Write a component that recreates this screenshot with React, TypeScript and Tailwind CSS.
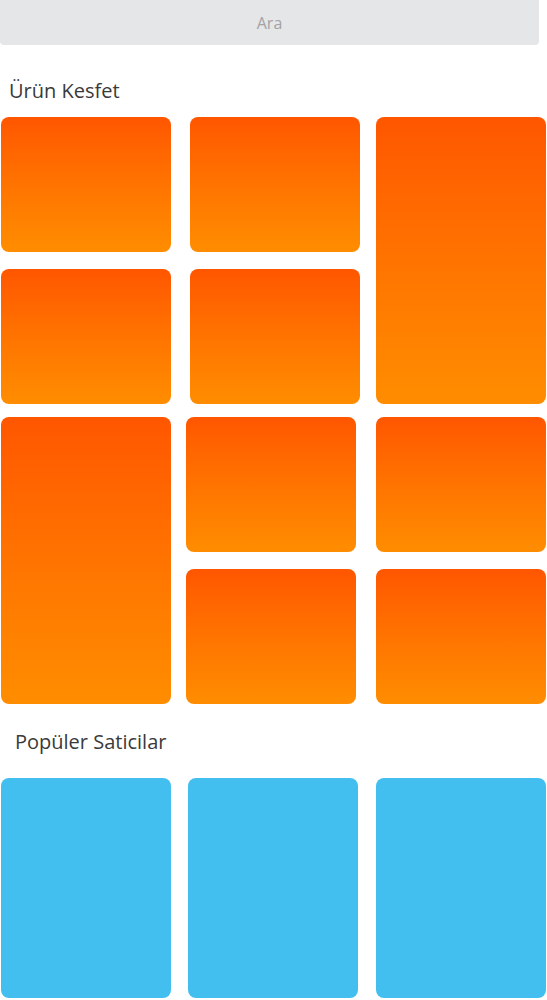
import React from 'react';

const font = { fontFamily: '"Open Sans", "Noto Sans", sans-serif' };

const Tile = ({ className = '' }: { className?: string }) => (
  <div className={`rounded-lg bg-gradient-to-b from-[#ff5600] to-[#ff8d00] ${className}`} />
);

const Seller = ({ className = '' }: { className?: string }) => (
  <div className={`h-[220px] w-[170px] rounded-lg bg-[#42bfef] ${className}`} />
);

export default function App() {
  return (
    <div className="w-[547px] bg-white" style={font}>
      {/* Arama */}
      <div className="flex h-[45px] w-[539px] items-center justify-center rounded-b-[4px] bg-[#e5e6e8]">
        <span className="text-[16px] font-medium text-[#a3a3a3]">Ara</span>
      </div>

      <h2 className="ml-[9px] mt-[33px] text-[20px] font-medium leading-[26px] text-[#3a3a3a]">Ürün Kesfet</h2>

      {/* Blok 1 */}
      <div className="mt-[13px] flex pl-px">
        <div className="flex w-[170px] flex-col gap-[17px]">
          <Tile className="h-[135px]" />
          <Tile className="h-[135px]" />
        </div>
        <div className="ml-[19px] flex w-[170px] flex-col gap-[17px]">
          <Tile className="h-[135px]" />
          <Tile className="h-[135px]" />
        </div>
        <Tile className="ml-[16px] h-[287px] w-[170px]" />
      </div>

      {/* Blok 2 */}
      <div className="mt-[13px] flex pl-px">
        <Tile className="h-[287px] w-[170px]" />
        <div className="ml-[15px] flex w-[170px] flex-col gap-[17px]">
          <Tile className="h-[135px]" />
          <Tile className="h-[135px]" />
        </div>
        <div className="ml-[20px] flex w-[170px] flex-col gap-[17px]">
          <Tile className="h-[135px]" />
          <Tile className="h-[135px]" />
        </div>
      </div>

      <h2 className="ml-[15px] mt-[25px] text-[20px] font-medium leading-[26px] text-[#3a3a3a]">Popüler Saticilar</h2>

      <div className="mt-[23px] flex pl-px">
        <Seller />
        <Seller className="ml-[17px]" />
        <Seller className="ml-[18px]" />
      </div>
    </div>
  );
}
